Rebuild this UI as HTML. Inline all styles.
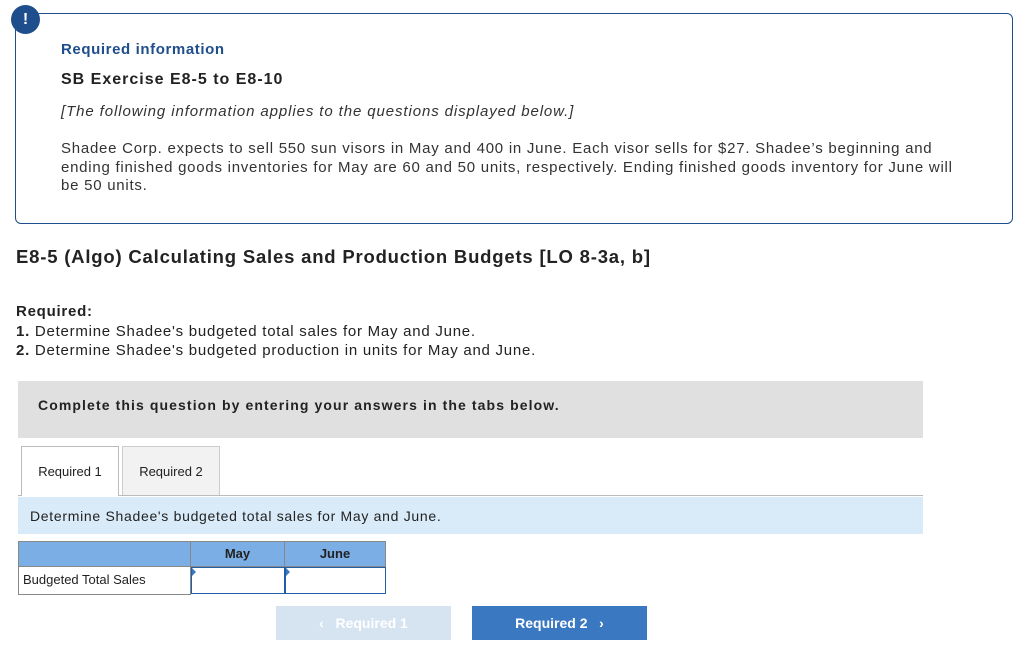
<!DOCTYPE html>
<html><head><meta charset="utf-8"><style>
body{margin:0;width:1024px;height:672px;background:#fff;font-family:"Liberation Sans",Arial,sans-serif;color:#222;position:relative;overflow:hidden}
.a{position:absolute}
.box{left:15px;top:13px;width:998px;height:211px;border:1px solid #1f4e8c;border-radius:6px;box-sizing:border-box}
.icon{left:11px;top:5px;width:29px;height:29px;border-radius:50%;background:#1f4e8c;color:#fff;font-weight:bold;font-size:16px;text-align:center;line-height:29px}
.tri{position:absolute;left:0;top:0;width:0;height:0;border-top:4px solid transparent;border-bottom:4px solid transparent;border-left:4px solid #3b78c2}
</style></head><body>
<div class="a box"></div>
<div class="a icon">!</div>
<div class="a" style="left:61px;top:41px;font-size:15px;font-weight:bold;color:#1f4e8c;letter-spacing:0.6px">Required information</div>
<div class="a" style="left:61px;top:71px;font-size:16px;font-weight:bold;color:#222;letter-spacing:1px">SB Exercise E8-5 to E8-10</div>
<div class="a" style="left:61px;top:103px;font-size:15px;font-style:italic;color:#333;letter-spacing:0.9px">[The following information applies to the questions displayed below.]</div>
<div class="a" style="left:61px;top:140px;width:908px;font-size:15px;line-height:18.5px;color:#333;letter-spacing:0.75px">Shadee Corp. expects to sell 550 sun visors in May and 400 in June. Each visor sells for $27. Shadee’s beginning and ending finished goods inventories for May are 60 and 50 units, respectively. Ending finished goods inventory for June will be 50 units.</div>
<div class="a" style="left:16px;top:246px;font-size:18.5px;font-weight:bold;color:#222;letter-spacing:0.8px">E8-5 (Algo) Calculating Sales and Production Budgets [LO 8-3a, b]</div>
<div class="a" style="left:16px;top:302px;font-size:15px;line-height:19.5px;color:#222;letter-spacing:0.75px"><b>Required:</b><br><b>1.</b> Determine Shadee's budgeted total sales for May and June.<br><b>2.</b> Determine Shadee's budgeted production in units for May and June.</div>
<div class="a" style="left:18px;top:381px;width:905px;height:57px;background:#e0e0e0"></div>
<div class="a" style="left:38px;top:397px;font-size:14px;font-weight:bold;color:#222;letter-spacing:1.1px">Complete this question by entering your answers in the tabs below.</div>
<div class="a" style="left:18px;top:495px;width:905px;height:1px;background:#bbb"></div>
<div class="a" style="left:21px;top:446px;width:98px;height:50px;background:#fff;border:1px solid #bbb;border-bottom:none;font-size:13px;text-align:center;line-height:50px;box-sizing:border-box">Required 1</div>
<div class="a" style="left:122px;top:446px;width:98px;height:49px;background:#f2f2f2;border:1px solid #ccc;border-bottom:none;font-size:13px;text-align:center;line-height:50px;box-sizing:border-box">Required 2</div>
<div class="a" style="left:18px;top:497px;width:905px;height:37px;background:#d9ebf8"></div>
<div class="a" style="left:30px;top:508px;font-size:14px;color:#222;letter-spacing:0.7px">Determine Shadee's budgeted total sales for May and June.</div>
<div class="a" style="left:18px;top:541px;width:368px;height:26px;background:#7aaee4;border:1px solid #888;box-sizing:border-box"></div>
<div class="a" style="left:190px;top:541px;width:1px;height:54px;background:#888"></div>
<div class="a" style="left:284px;top:541px;width:1px;height:26px;background:#888"></div>
<div class="a" style="left:191px;top:546px;width:93px;text-align:center;font-size:13px;font-weight:bold">May</div>
<div class="a" style="left:285px;top:546px;width:100px;text-align:center;font-size:13px;font-weight:bold">June</div>
<div class="a" style="left:18px;top:567px;width:173px;height:28px;border:1px solid #888;border-top:none;box-sizing:border-box;font-size:13px;line-height:26px;padding-left:4px">Budgeted Total Sales</div>
<div class="a" style="left:191px;top:567px;width:94px;height:27px;border:1px solid #1f5ea8;box-sizing:border-box"><div class="tri"></div></div>
<div class="a" style="left:285px;top:567px;width:101px;height:27px;border:1px solid #1f5ea8;box-sizing:border-box"><div class="tri"></div></div>
<div class="a" style="left:276px;top:606px;width:175px;height:34px;background:#d6e3f1;color:#fff;font-size:14px;font-weight:bold;text-align:center;line-height:34px">‹&nbsp;&nbsp; Required 1</div>
<div class="a" style="left:472px;top:606px;width:175px;height:34px;background:#3b78c2;color:#fff;font-size:14px;font-weight:bold;text-align:center;line-height:34px">Required 2 &nbsp;&nbsp;›</div>
</body></html>
